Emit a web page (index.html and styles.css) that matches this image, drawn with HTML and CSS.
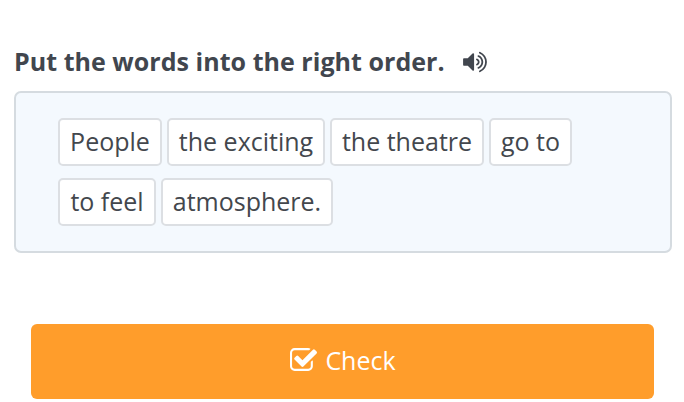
FILE: index.html
```html
<!DOCTYPE html>
<html lang="en">
<head>
<meta charset="utf-8">
<title>Word order</title>
<link rel="stylesheet" href="styles.css">
</head>
<body>
<main class="exercise">
<h1 class="title">Put the words into the right order.
<svg class="speaker" viewBox="0 0 1664 1536"><path fill="currentColor" d="M768 224v1088q0 26-19 45t-45 19-45-19L326 1024H64q-26 0-45-19T0 960V576q0-26 19-45t45-19h262l333-333q19-19 45-19t45 19 19 45zM1152 768q0 76-42.500 141.500T997 1003q-10 5-25 5-26 0-45-18.500T908 944q0-21 12-35.500t29-25 34-23 29-36 12-56.500-12-56.500-29-36-34-23-29-25-12-35.500q0-27 19-45.500t45-18.500q15 0 25 5 70 27 112.500 93t42.500 142zM1408 768q0 153-85 282.500T1098 1239q-13 5-25 5-27 0-46-19t-19-45q0-39 39-59 56-29 76-44 74-54 115.500-135.500T1280 768t-41.500-173.500T1123 459q-20-15-76-44-39-20-39-59 0-26 19-45t45-19q13 0 26 5 140 59 225 188.500T1408 768zM1664 768q0 230-127 422.500T1199 1474q-13 5-26 5-26 0-45-19t-19-45q0-36 39-59 7-4 22.500-10.500t22.500-10.500q46-25 82-51 123-91 192-227t69-289-69-289-192-227q-36-26-82-51-7-4-22.500-10.500T1148 180q-39-23-39-59 0-26 19-45t45-19q13 0 26 5 211 91 338 283.500T1664 768z"/></svg></h1>
<section class="board">
<span class="word people">People</span><span class="word exciting">the exciting</span><span class="word theatre">the theatre</span><span class="word goto">go to</span><span class="word feel">to feel</span><span class="word atmosphere">atmosphere.</span>
</section>
<button class="check"><svg class="tick" viewBox="0 0 1664 1408"><path fill="currentColor" d="M1408 802v318q0 119-84.500 203.500T1120 1408H288q-119 0-203.500-84.500T0 1120V288Q0 169 84.500 84.500T288 0h832q63 0 117 25 15 7 18 23 3 17-9 29l-49 49q-14 14-32 8-23-6-45-6H288q-66 0-113 47t-47 113v832q0 66 47 113t113 47h832q66 0 113-47t47-113V866q0-13 9-22l64-64q15-15 35-7t20 29zM1639 327L825 1141q-24 24-57 24t-57-24L281 711q-24-24-24-57t24-57l110-110q24-24 57-24t57 24l263 263 647-647q24-24 57-24t57 24l110 110q24 24 24 57t-24 57z"/></svg><span>Check</span></button>
</main>
</body>
</html>
```
FILE: styles.css
```css
* { box-sizing: border-box; }
body {
  margin: 0;
  background: #fff;
  color: #43474d;
  font-family: "Open Sans", "Noto Sans", sans-serif;
}
.exercise { padding: 43px 12px 0 14px; }
.title {
  display: flex;
  align-items: center;
  gap: 18px;
  height: 36px;
  margin: 0 0 12px;
  color: #41464e;
  font-size: 25px;
  font-weight: 700;
  letter-spacing: 0.04px;
  white-space: nowrap;
}
.speaker { width: 24px; height: 22px; margin-top: 2px; }
.board {
  display: flex;
  flex-wrap: wrap;
  align-content: flex-start;
  gap: 12px 5px;
  height: 162px;
  padding: 25px 42px;
  border: 2px solid #d5dbe0;
  border-radius: 7px;
  background: #f4f9fe;
}
.word {
  height: 48px;
  border: 2px solid #dcdfe3;
  border-radius: 5px;
  background: #fff;
  font-size: 25px;
  line-height: 42px;
  text-align: center;
  white-space: nowrap;
}
.people { width: 104px; }
.exciting { width: 158px; }
.theatre { width: 154px; }
.goto { width: 83px; }
.feel { width: 98px; }
.atmosphere { width: 172px; }
.check {
  display: flex;
  align-items: center;
  justify-content: center;
  gap: 9px;
  width: 623px;
  height: 75px;
  margin: 71px 0 0 17px;
  padding: 0 0 3px;
  border: 0;
  border-radius: 6px;
  background: #ff9d2b;
  color: #fff;
  font-family: inherit;
  font-size: 25px;
}
.tick { width: 27px; height: 23px; margin: 0 -1px 2px 1px; }
```
